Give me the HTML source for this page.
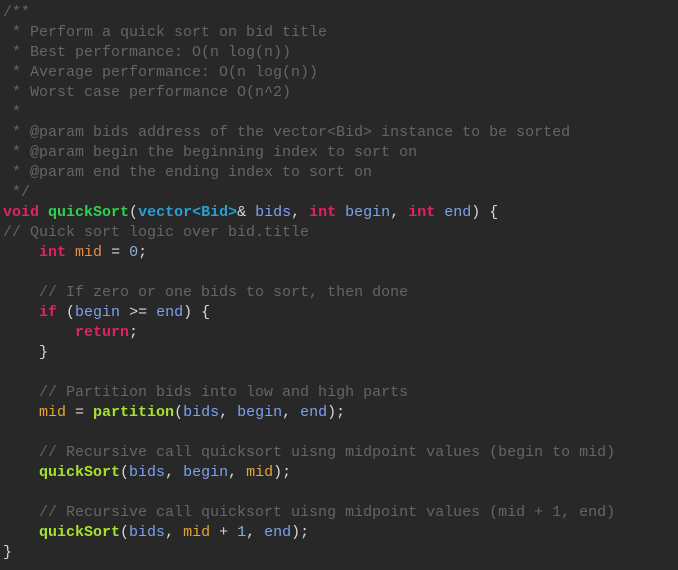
<!DOCTYPE html>
<html><head><style>
body{margin:0;background:#282828;width:678px;height:570px;overflow:hidden}
pre{margin:0;padding:3px 0 0 3px;font:15px/20px "Liberation Mono",monospace;color:#d8d8d8;white-space:pre}
.c{color:#656565}.k{color:#e0245e;font-weight:bold}.f{color:#2fcf4f;font-weight:bold}.t{color:#2a9fd6;font-weight:bold}
.p{color:#7aa2f0}.v{color:#e88b4a}.m{color:#e5a52f}.n{color:#8fb0d8}.g{color:#a6e22e;font-weight:bold}
</style></head><body><pre><span class="c">/**
 * Perform a quick sort on bid title
 * Best performance: O(n log(n))
 * Average performance: O(n log(n))
 * Worst case performance O(n^2)
 *
 * @param bids address of the vector&lt;Bid&gt; instance to be sorted
 * @param begin the beginning index to sort on
 * @param end the ending index to sort on
 */</span>
<span class="k">void</span> <span class="f">quickSort</span>(<span class="t">vector</span><span class="t">&lt;Bid&gt;</span>&amp; <span class="p">bids</span>, <span class="k">int</span> <span class="p">begin</span>, <span class="k">int</span> <span class="p">end</span>) {
<span class="c">// Quick sort logic over bid.title</span>
    <span class="k">int</span> <span class="v">mid</span> = <span class="n">0</span>;

    <span class="c">// If zero or one bids to sort, then done</span>
    <span class="k">if</span> (<span class="p">begin</span> &gt;= <span class="p">end</span>) {
        <span class="k">return</span>;
    }

    <span class="c">// Partition bids into low and high parts</span>
    <span class="m">mid</span> = <span class="g">partition</span>(<span class="p">bids</span>, <span class="p">begin</span>, <span class="p">end</span>);

    <span class="c">// Recursive call quicksort uisng midpoint values (begin to mid)</span>
    <span class="g">quickSort</span>(<span class="p">bids</span>, <span class="p">begin</span>, <span class="m">mid</span>);

    <span class="c">// Recursive call quicksort uisng midpoint values (mid + 1, end)</span>
    <span class="g">quickSort</span>(<span class="p">bids</span>, <span class="m">mid</span> + <span class="n">1</span>, <span class="p">end</span>);
}</pre></body></html>
